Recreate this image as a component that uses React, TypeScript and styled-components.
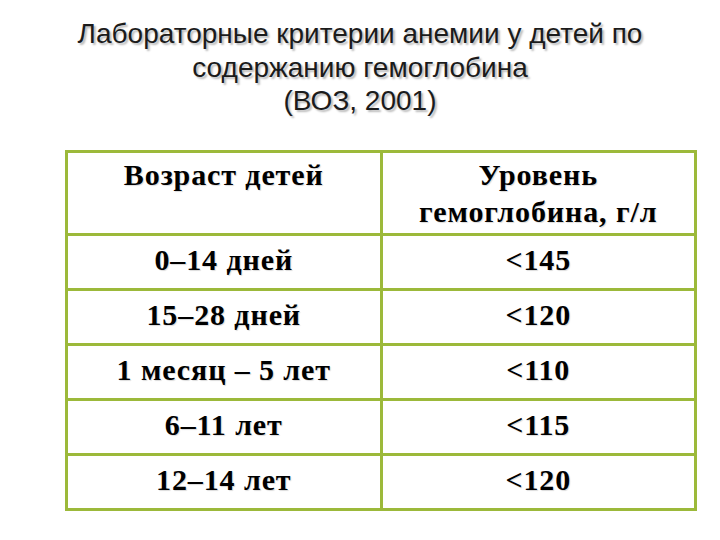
import React from "react";
import styled, { createGlobalStyle } from "styled-components";

type Row = {
  age: string;
  level: string;
};

const rows: Row[] = [
  { age: "0–14 дней", level: "<145" },
  { age: "15–28 дней", level: "<120" },
  { age: "1 месяц – 5 лет", level: "<110" },
  { age: "6–11 лет", level: "<115" },
  { age: "12–14 лет", level: "<120" },
];

const App: React.FC = () => {
  return (
    <>
      <GlobalStyle />
      <Slide>
        <Title>
          Лабораторные критерии анемии у детей по
          <br />
          содержанию гемоглобина
          <br />
          (ВОЗ, 2001)
        </Title>
        <Table>
          <colgroup>
            <col style={{ width: "50%" }} />
            <col style={{ width: "50%" }} />
          </colgroup>
          <thead>
            <tr>
              <HeadCell>Возраст детей</HeadCell>
              <HeadCell>
                Уровень
                <br />
                гемоглобина, г/л
              </HeadCell>
            </tr>
          </thead>
          <tbody>
            {rows.map((row, i) => (
              <tr key={i}>
                <Cell>{row.age}</Cell>
                <Cell>{row.level}</Cell>
              </tr>
            ))}
          </tbody>
        </Table>
      </Slide>
    </>
  );
};

export default App;

const GlobalStyle = createGlobalStyle`
  html, body {
    margin: 0;
    padding: 0;
    background: #fff;
  }
`;

const Slide = styled.div`
  width: 720px;
  height: 540px;
  background: #fff;
  display: flex;
  flex-direction: column;
  align-items: stretch;
  padding-top: 17px;
  box-sizing: border-box;
`;

const Title = styled.h1`
  margin: 0;
  font-family: "Liberation Sans", Arial, sans-serif;
  font-weight: normal;
  font-size: 28px;
  line-height: 33.5px;
  color: #1b1b1b;
  text-align: center;
  text-shadow: 2px 2px 2px rgba(0, 0, 0, 0.28);
`;

const Table = styled.table`
  margin: 32px 0 0 65px;
  width: 632px;
  border-collapse: collapse;
  table-layout: fixed;
  border: 3px solid #9cb93a;
  font-family: "Liberation Serif", "Times New Roman", serif;
  font-weight: bold;
  font-size: 30px;
  letter-spacing: 0.9px;
  color: #000;
`;

const HeadCell = styled.th`
  border: 3px solid #9cb93a;
  height: 83px;
  padding: 3px 4px 0;
  vertical-align: top;
  text-align: center;
  line-height: 37px;
  box-sizing: border-box;
  text-shadow: 1px 1px 1px rgba(0, 0, 0, 0.15);
`;

const Cell = styled.td`
  border: 3px solid #9cb93a;
  height: 55px;
  padding: 0 4px 3px;
  vertical-align: middle;
  text-align: center;
  line-height: 32px;
  box-sizing: border-box;
  text-shadow: 1px 1px 1px rgba(0, 0, 0, 0.15);
`;
